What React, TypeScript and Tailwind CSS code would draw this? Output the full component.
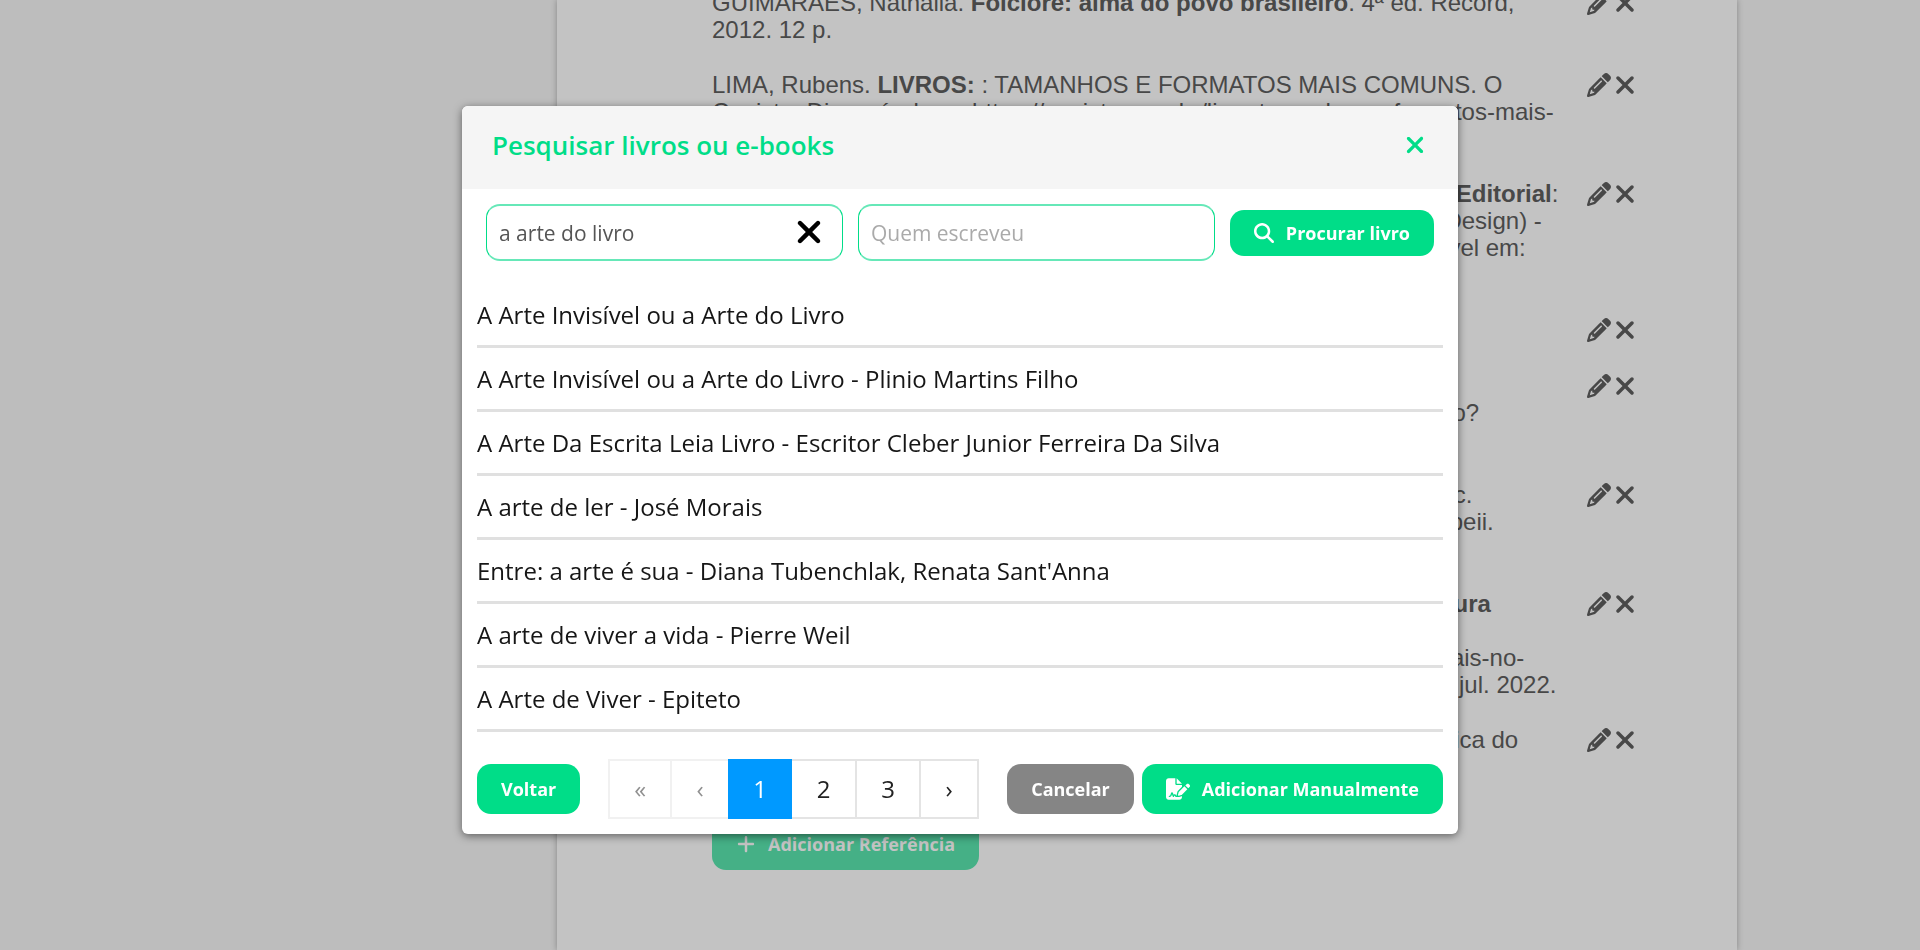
import { FaFileSignature, FaMagnifyingGlass, FaPencil, FaPlus, FaXmark } from "react-icons/fa6";

const referencias = [
  {
    linhas: [
      <>GUIMARÃES, Nathalia. <b>Folclore: alma do povo brasileiro</b>. 4ª ed. Record,</>,
      "2012. 12 p.",
    ],
  },
  {
    linhas: [
      <>LIMA, Rubens. <b>LIVROS:</b> : TAMANHOS E FORMATOS MAIS COMUNS. O</>,
      "Capista. Disponível em: https://capista.com.br/livro-tamanhos-e-formatos-mais-",
      "comuns/. Acesso em: 12 jul. 2022.",
    ],
  },
  {
    linhas: [
      <>MARTINS, Helena. <b>O design do livro e a prática no novo Mercado Editorial</b>:</>,
      "2018. 96 f. Trabalho de Conclusão de Curso (Graduação em Artes e Design) -",
      "Universidade Federal do Rio de Janeiro, Brasil, agosto 2018. Disponível em:",
      "https://pantheon.ufrj.br. Acesso em: 12 jul. 2022.",
    ],
  },
  { linhas: ["MELO, Chico. Design de livros. 2ª ed. Rosari, 2012."] },
  {
    linhas: [
      "MORAES, Ana. Quais são os formatos do livro",
      "e como escolher o melhor tamanho, para o seu próximo projeto gráfico?",
      "Acesso em: 12 jul. 2022.",
    ],
  },
  {
    linhas: [
      "NUNES, Ana Carla. A história dos primeiros livros, desde o século I a.c.",
      "Os rolos de papiro e as dez bibliotecas romanas das cidades de Pompeii.",
      "Acesso em: 12 jul. 2022.",
    ],
  },
  {
    linhas: [
      <>PEREIRA, Armando. <b>Os formatos de livros mais comuns na literatura</b></>,
      "brasileira. Disponível em:",
      "https://blog.letras.com.br/os-formatos-de-livros-e-impressos-mais-usuais-no-",
      "mercado-editorial-brasileiro-contemporaneo-nacional/. Acesso em: 12 jul. 2022.",
    ],
  },
  { linhas: ["SILVA, Marcos. A produção editorial brasileira, e a história atual e gráfica do"] },
];

const livros = [
  "A Arte Invisível ou a Arte do Livro",
  "A Arte Invisível ou a Arte do Livro - Plinio Martins Filho",
  "A Arte Da Escrita Leia Livro - Escritor Cleber Junior Ferreira Da Silva",
  "A arte de ler - José Morais",
  "Entre: a arte é sua - Diana Tubenchlak, Renata Sant'Anna",
  "A arte de viver a vida - Pierre Weil",
  "A Arte de Viver - Epiteto",
];

const campo =
  "h-[57px] w-full rounded-[14px] border-x border-y-2 border-x-[#00dd88] border-y-[#66e8b8] px-3 text-[21px] text-[#555] outline-none placeholder:text-[#aaa]";

function Referencias() {
  return (
    <main className="mx-auto flow-root min-h-screen w-[1180px] max-w-full bg-[#c3c3c3] pr-[98px] pl-[155px] shadow-[0_0_6px_rgba(0,0,0,0.3)]">
      <ul className="-mt-[11px] flex flex-col gap-7 font-['Liberation_Sans',Arial,sans-serif] text-2xl leading-[27px] text-[#484848]">
        {referencias.map((ref, i) => (
          <li key={i} className="flex items-start justify-between">
            <div className="whitespace-nowrap">
              {ref.linhas.map((linha, j) => (
                <p key={j}>{linha}</p>
              ))}
            </div>
            <div className="flex h-7 items-center">
              <button type="button" aria-label="Editar">
                <FaPencil className="size-6" />
              </button>
              <button type="button" aria-label="Remover">
                <FaXmark className="size-7" />
              </button>
            </div>
          </li>
        ))}
      </ul>
      <button
        type="button"
        className="mt-16 flex h-[52px] items-center gap-3 rounded-[14px] bg-[#45b086] px-6 text-lg font-bold text-[#c3c3c3]"
      >
        <FaPlus className="size-5" />
        Adicionar Referência
      </button>
    </main>
  );
}

function Paginacao() {
  const celula = "flex h-[60px] items-center justify-center border-2 border-[#e4e4e4] text-2xl";
  return (
    <nav aria-label="Paginação" className="flex text-[#222]">
      <button type="button" disabled className={`${celula} w-[62px] border-r-0 opacity-50`}>«</button>
      <button type="button" disabled className={`${celula} w-[58px] border-r-0 opacity-50`}>‹</button>
      <button type="button" aria-current="page" className="h-[60px] w-16 bg-[#0099ff] text-2xl text-white">1</button>
      <button type="button" className={`${celula} w-[65px] border-l-0`}>2</button>
      <button type="button" className={`${celula} w-16 border-l-0`}>3</button>
      <button type="button" className={`${celula} w-[58px] border-l-0`}>›</button>
    </nav>
  );
}

function ModalLivros() {
  return (
    <div className="fixed inset-x-0 top-[106px] flex justify-center">
      <div
        role="dialog"
        aria-labelledby="titulo"
        className="w-[996px] max-w-full overflow-hidden rounded-md bg-white shadow-[0_2px_8px_rgba(0,0,0,0.5)]"
      >
        <header className="flex h-[83px] items-start justify-between bg-[#f5f5f5] px-[30px] pt-5 text-[#00dd88]">
          <h2 id="titulo" className="text-[26px] leading-[38px] font-semibold">
            Pesquisar livros ou e-books
          </h2>
          <button type="button" aria-label="Fechar" className="flex h-[38px] items-center">
            <FaXmark className="size-[26px]" />
          </button>
        </header>

        <form className="flex items-center gap-[15px] px-6 pt-[15px]">
          <div className="relative min-w-0 flex-1">
            <input aria-label="Título do livro" defaultValue="a arte do livro" className={campo} />
            <button type="button" aria-label="Limpar" className="absolute top-[10px] right-4 text-black">
              <FaXmark className="size-9" />
            </button>
          </div>
          <div className="min-w-0 flex-1">
            <input aria-label="Autor" placeholder="Quem escreveu" className={campo} />
          </div>
          <button
            type="button"
            className="flex h-[46px] items-center gap-3 rounded-[14px] bg-[#00dd88] px-6 text-lg font-bold text-white"
          >
            <FaMagnifyingGlass className="size-5" />
            Procurar livro
          </button>
        </form>

        <ul className="mt-[23px] px-[15px] text-2xl text-[#161616]">
          {livros.map((livro) => (
            <li key={livro} className="flex h-16 items-center border-b-[3px] border-[#e0e0e0]">
              {livro}
            </li>
          ))}
        </ul>

        <footer className="flex items-center px-[15px] pt-[27px] pb-[15px] text-lg font-bold text-white">
          <button type="button" className="h-[50px] rounded-[14px] bg-[#00dd88] px-6">
            Voltar
          </button>
          <div className="ml-7 font-normal">
            <Paginacao />
          </div>
          <div className="ml-auto flex gap-2">
            <button type="button" className="h-[50px] rounded-[14px] bg-[#858585] px-6">
              Cancelar
            </button>
            <button type="button" className="flex h-[50px] items-center gap-3 rounded-[14px] bg-[#00dd88] px-6">
              <FaFileSignature className="size-6" />
              Adicionar Manualmente
            </button>
          </div>
        </footer>
      </div>
    </div>
  );
}

export default function App() {
  return (
    <div className="h-screen overflow-hidden bg-[#bdbdbd] pl-[374px] font-['Open_Sans','Noto_Sans',sans-serif]">
      <Referencias />
      <ModalLivros />
    </div>
  );
}
